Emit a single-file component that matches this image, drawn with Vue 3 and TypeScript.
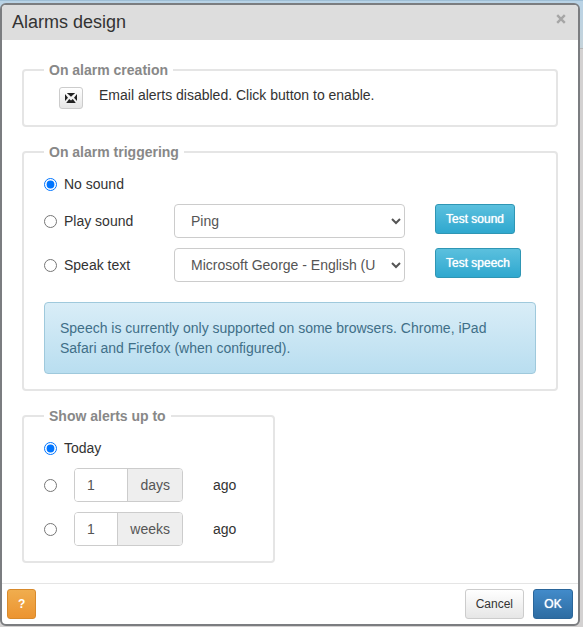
<script setup lang="ts">
import { ref } from 'vue'

type SoundMode = 'none' | 'play' | 'speak'
type AlertRange = 'today' | 'days' | 'weeks'

const soundMode = ref<SoundMode>('none')
const sound = ref('Ping')
const voice = ref('george')
const range = ref<AlertRange>('today')
const days = ref('1')
const weeks = ref('1')
</script>

<template>
  <div class="page">
    <form class="dialog" role="dialog" aria-labelledby="dialog-title" @submit.prevent>
      <header class="header">
        <h1 id="dialog-title" class="title">Alarms design</h1>
        <button type="button" class="close" aria-label="Close">
          <svg viewBox="0 0 10 10" width="10" height="10" aria-hidden="true">
            <path d="M1.2 1.2 8.8 8.8M8.8 1.2 1.2 8.8" />
          </svg>
        </button>
      </header>

      <main class="body">
        <fieldset class="group">
          <legend>On alarm creation</legend>
          <div class="creation">
            <button type="button" class="btn mail" aria-label="Enable email alerts">
              <svg viewBox="0 0 12 10" width="12" height="10" aria-hidden="true">
                <path d="M1.8 0H10.2L6 3.8ZM0 1 3 4.8 0 8ZM12 1 9 4.8 12 8ZM4.2 6 6 7.4 7.8 6 10.8 10H1.2Z" />
              </svg>
            </button>
            <span>Email alerts disabled. Click button to enable.</span>
          </div>
        </fieldset>

        <fieldset class="group">
          <legend>On alarm triggering</legend>
          <label class="choice first">
            <input v-model="soundMode" type="radio" name="sound-mode" value="none" />
            No sound
          </label>
          <div class="sound-row">
            <label class="choice">
              <input v-model="soundMode" type="radio" name="sound-mode" value="play" />
              Play sound
            </label>
            <select v-model="sound" class="control" aria-label="Sound">
              <option value="Ping">Ping</option>
            </select>
            <button type="button" class="btn info">Test sound</button>
          </div>
          <div class="sound-row">
            <label class="choice">
              <input v-model="soundMode" type="radio" name="sound-mode" value="speak" />
              Speak text
            </label>
            <select v-model="voice" class="control" aria-label="Voice">
              <option value="george">Microsoft George - English (United Kingdom)</option>
            </select>
            <button type="button" class="btn info">Test speech</button>
          </div>
          <p class="note">
            Speech is currently only supported on some browsers. Chrome, iPad Safari and Firefox (when configured).
          </p>
        </fieldset>

        <fieldset class="group narrow">
          <legend>Show alerts up to</legend>
          <label class="choice first">
            <input v-model="range" type="radio" name="range" value="today" />
            Today
          </label>
          <div class="range-row">
            <input v-model="range" type="radio" name="range" value="days" aria-label="Days ago" />
            <label class="amount">
              <input v-model="days" type="text" inputmode="numeric" />
              <span class="unit">days</span>
            </label>
            <span>ago</span>
          </div>
          <div class="range-row">
            <input v-model="range" type="radio" name="range" value="weeks" aria-label="Weeks ago" />
            <label class="amount">
              <input v-model="weeks" type="text" inputmode="numeric" />
              <span class="unit">weeks</span>
            </label>
            <span>ago</span>
          </div>
        </fieldset>
      </main>

      <footer class="footer">
        <button type="button" class="btn help" aria-label="Help">?</button>
        <button type="button" class="btn cancel">Cancel</button>
        <button type="submit" class="btn primary">OK</button>
      </footer>
    </form>
  </div>
</template>

<style>
body {
  background: linear-gradient(#9fbfd6 0 1px, #b9d3e6 1px, #c5d3da 48px, #b5b5b5 48px 49px, #d3d1d1 49px) no-repeat #d3d1d1;
}
</style>

<style scoped>
* {
  box-sizing: border-box;
}

.page {
  padding: 3px 3px 1px 0;
  font: 14px/20px "Liberation Sans", Arial, sans-serif;
  color: #333;
}

.dialog {
  border: 2px solid #7b7d80;
  border-radius: 6px;
  background: #fff;
  overflow: hidden;
}

.header {
  display: flex;
  align-items: flex-start;
  justify-content: space-between;
  padding: 7px 10px 8px;
  background: #ddd;
}

.title {
  margin: 0;
  font-size: 18px;
  line-height: 20px;
  font-weight: 400;
}

.close {
  display: flex;
  padding: 2px;
  border: 0;
  background: none;
}

.close path {
  fill: none;
  stroke: #a6a6a6;
  stroke-width: 2.4;
}

.body {
  padding: 20px;
}

.group {
  min-width: 0;
  margin: 0 0 15px;
  padding: 0 20px 15px;
  border: 2px solid #e5e5e5;
  border-radius: 4px;
}

.narrow {
  width: 253px;
  margin-bottom: 0;
}

legend {
  padding: 0 5px;
  font-weight: 700;
  color: #888;
}

.creation {
  display: flex;
  align-items: flex-start;
  gap: 16px;
  padding: 5px 0 1px 15px;
}

input[type="radio"] {
  flex: none;
  width: 13px;
  height: 13px;
  margin: 0;
}

.choice {
  display: flex;
  align-items: center;
  gap: 7px;
}

.first {
  margin: 12px 0 10px;
}

.sound-row {
  display: grid;
  grid-template-columns: 100px minmax(0, 1fr) 101px;
  align-items: center;
  column-gap: 30px;
  margin-bottom: 10px;
}

.control {
  width: 100%;
  height: 34px;
  padding: 6px 12px;
  border: 1px solid #ccc;
  border-radius: 4px;
  background: #fff;
  color: #555;
  font: inherit;
}

.btn {
  height: 30px;
  padding: 0 10px;
  border: 1px solid #ccc;
  border-radius: 3px;
  font: 12px/18px "Liberation Sans", Arial, sans-serif;
  color: #333;
  background: linear-gradient(#fff, #e6e6e6);
}

.mail {
  display: flex;
  align-items: center;
  justify-content: center;
  width: 24px;
  height: 22px;
  margin-top: 2px;
  padding: 0;
}

.mail path {
  fill: #222;
}

.info {
  align-self: start;
  justify-self: start;
  border-color: #2f96b4;
  background: linear-gradient(#5bc0de, #2fa8cf);
  color: #fff;
  text-shadow: 0 0 1px #fff;
}

.note {
  margin: 20px 0 0;
  padding: 15px;
  border: 1px solid #9fc9dc;
  border-radius: 4px;
  background: linear-gradient(#d9edf7, #b9def0);
  color: #3f6f88;
}

.range-row {
  display: flex;
  align-items: center;
  margin-top: 10px;
}

.amount {
  display: flex;
  width: 109px;
  height: 34px;
  margin: 0 30px 0 17px;
  border: 1px solid #ccc;
  border-radius: 4px;
  overflow: hidden;
  color: #555;
}

.amount input {
  flex: 1;
  min-width: 0;
  padding: 6px 12px;
  border: 0;
  font: inherit;
  color: inherit;
}

.unit {
  padding: 6px 12px;
  border-left: 1px solid #ccc;
  background: #eee;
}

.footer {
  display: flex;
  gap: 9px;
  padding: 5px;
  border-top: 1px solid #e5e5e5;
}

.help {
  margin-right: auto;
  border-color: #d88a2c;
  background: linear-gradient(#f0ad4e, #ec9430);
  color: #fff;
  font-weight: 700;
}

.primary {
  min-width: 40px;
  border-color: #2b669a;
  background: linear-gradient(#428bca, #2d6ca2);
  color: #fff;
  text-shadow: 0 0 1px #fff;
}
</style>
